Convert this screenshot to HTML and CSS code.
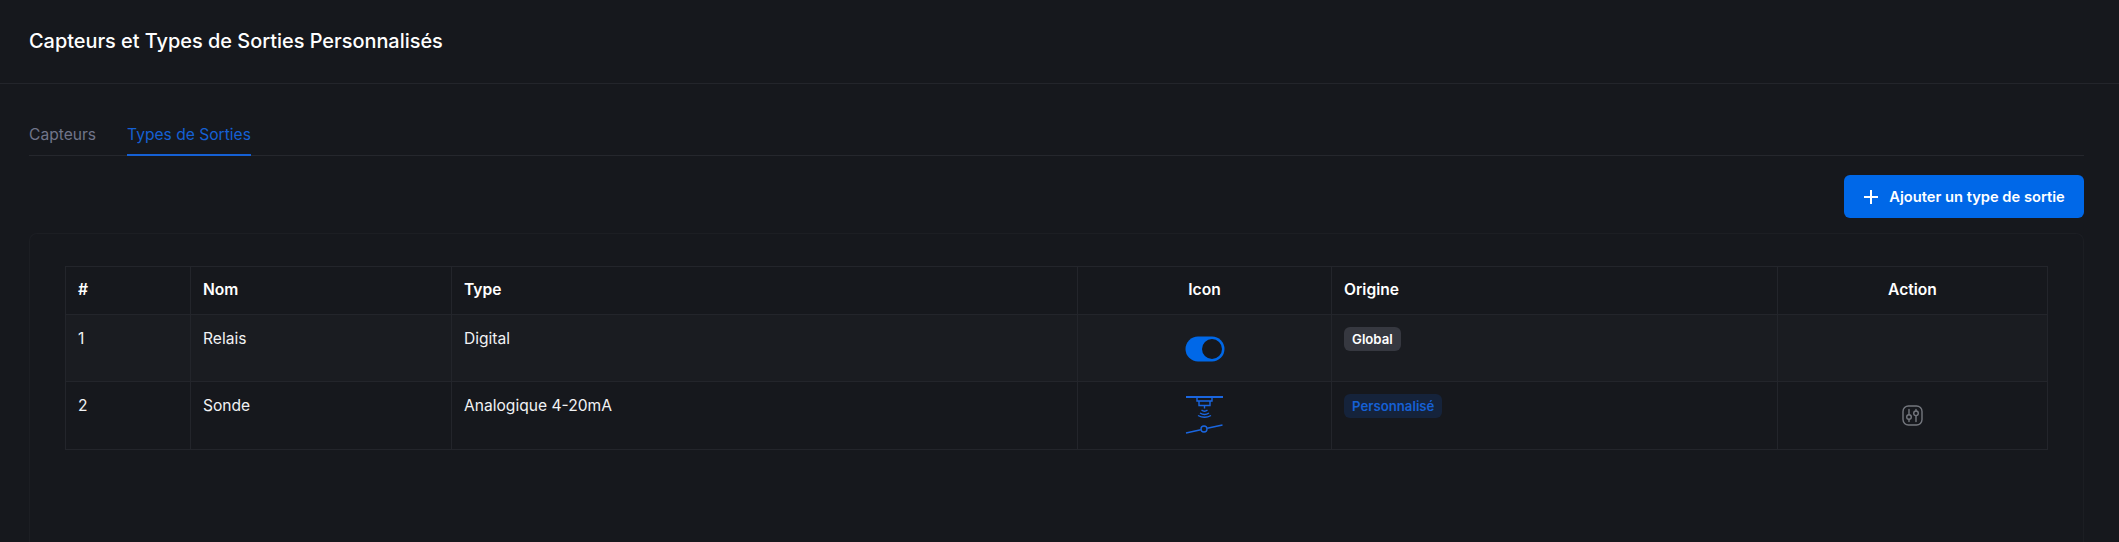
FILE: index.html
```html
<!doctype html>
<html>
<head>
    <meta charset="utf-8">
    <meta name="viewport" content="width=device-width, initial-scale=1.0">
    <title>Capteurs et Types de Sorties</title>
    <link rel="stylesheet" href="styles.css">
</head>
<body>
    <div class="page-header">
        <h1 class="page-title">Capteurs et Types de Sorties Personnalisés</h1>
    </div>
    <div class="page-body">
        <div class="tabs">
            <a class="tab">Capteurs</a>
            <a class="tab active">Types de Sorties</a>
        </div>
        <div class="toolbar">
            <button class="btn-add">
                <svg class="plus" width="16" height="16" viewBox="0 0 16 16"><path d="M8 1v14M1 8h14" stroke="#fff" stroke-width="2" fill="none"/></svg>
                Ajouter un type de sortie
            </button>
        </div>
        <div class="card">
            <table class="grid">
                <colgroup>
                    <col class="c-num"><col class="c-name"><col class="c-type"><col class="c-icon"><col class="c-origin"><col>
                </colgroup>
                <thead>
                    <tr>
                        <th>#</th>
                        <th>Nom</th>
                        <th>Type</th>
                        <th class="center">Icon</th>
                        <th>Origine</th>
                        <th class="center">Action</th>
                    </tr>
                </thead>
                <tbody>
                    <tr class="odd">
                        <td>1</td>
                        <td>Relais</td>
                        <td>Digital</td>
                        <td class="center icon-cell">
                            <svg class="icon toggle" width="40" height="26" viewBox="0 0 40 26"><rect x="0.500" y="0.500" width="39" height="25" rx="12.500" fill="#0068e8"/><circle cx="27" cy="13" r="10" fill="#16181d"/></svg>
                        </td>
                        <td><span class="badge global">Global</span></td>
                        <td></td>
                    </tr>
                    <tr class="even">
                        <td>2</td>
                        <td>Sonde</td>
                        <td>Analogique 4-20mA</td>
                        <td class="center icon-cell">
                            <svg class="icon sensor" width="40" height="42" viewBox="0 0 40 42" fill="none" stroke="#1a66e0" stroke-width="1.400">
                                <path d="M1 2h37" stroke-width="1.800"/>
                                <path d="M12 2v4h15V2"/>
                                <path d="M14 6v4.500h11V6"/>
                                <path d="M19.500 10.500v3"/>
                                <path d="M16.500 15q3 2.500 6 0M15 18q4.500 3 9 0M13 20.500q6.500 3.500 13 0"/>
                                <path d="M1 38l14.800-3.200M22.200 33.300l15.300-3.300"/>
                                <circle cx="19" cy="34" r="3"/>
                            </svg>
                        </td>
                        <td><span class="badge custom">Personnalisé</span></td>
                        <td class="center action-cell">
                            <svg class="icon" width="21" height="21" viewBox="0 0 21 21" fill="none" stroke="#74777e" stroke-width="1.400" stroke-linecap="round">
                                <rect x="1" y="1" width="19" height="19" rx="5.500"/>
                                <path d="M7 4.500v4.500M7 14.500v2M14 4.500v1M14 11v5.500"/>
                                <circle cx="7" cy="12" r="2.300"/>
                                <circle cx="14" cy="8.300" r="2.300"/>
                            </svg>
                        </td>
                    </tr>
                </tbody>
            </table>
        </div>
    </div>
</body>
</html>
```

FILE: styles.css
```css
html, body {
    margin: 0;
    padding: 0;
}
body {
    height: 542px;
    overflow: hidden;
    background-color: #16181d;
    color: #f1f2f4;
    font-family: Inter, "Liberation Sans", sans-serif;
    font-size: 15.6px;
}
.page-header {
    height: 83px;
    padding: 0 29px;
    display: flex;
    align-items: center;
    border-bottom: 1px solid #23252b;
}
.page-title {
    margin: 0 0 1px;
    font-size: 19.9px;
    font-weight: 500;
    color: #ffffff;
}
.page-body {
    padding: 31px 35px 0 29px;
}
.tabs {
    display: flex;
    gap: 31px;
    height: 40px;
    border-bottom: 1px solid #25272d;
}
.tab {
    height: 41px;
    line-height: 39px;
    box-sizing: border-box;
    color: #70758a;
}
.tab.active {
    color: #1560d4;
    border-bottom: 2px solid #1560d4;
}
.toolbar {
    display: flex;
    justify-content: flex-end;
    margin-top: 19px;
}
.btn-add {
    width: 240px;
    height: 43px;
    padding: 0;
    display: flex;
    align-items: center;
    justify-content: center;
    gap: 10px;
    border: 0;
    border-radius: 6px;
    background-color: #0068e8;
    color: #ffffff;
    font-family: inherit;
    font-size: 14.7px;
    font-weight: 600;
}
.card {
    box-sizing: border-box;
    margin-top: 15px;
    height: 309px;
    padding: 32px 35px 0 35px;
    border: 1px solid #1c1e23;
    border-bottom: 0;
    border-radius: 8px 8px 0 0;
}
.grid {
    width: 100%;
    table-layout: fixed;
    border-collapse: collapse;
    border: 1px solid #26282e;
}
.c-num { width: 125px; }
.c-name { width: 261px; }
.c-type { width: 626px; }
.c-icon { width: 254px; }
.c-origin { width: 446px; }
.grid th, .grid td {
    box-sizing: border-box;
    border: 1px solid #23252b;
    padding: 12px;
    text-align: left;
    vertical-align: top;
    line-height: 23px;
}
.grid th {
    height: 48px;
    padding-top: 11px;
    font-weight: 600;
    color: #ffffff;
}
.grid td {
    height: 67px;
}
.grid .even td {
    height: 68px;
}
.grid .center {
    text-align: center;
}
.odd td {
    background-color: #1a1c21;
}
.icon {
    display: block;
    margin: 0 auto;
}
.grid .icon-cell {
    padding: 0;
}
.toggle {
    margin-top: 21px;
}
.sensor {
    margin-top: 13px;
}
.grid .action-cell {
    padding: 0;
    vertical-align: middle;
}
.badge {
    display: inline-block;
    vertical-align: top;
    padding: 0 8px;
    height: 24px;
    line-height: 24px;
    border-radius: 6px;
    font-size: 13.2px;
    font-weight: 600;
}
.badge.global {
    background-color: #363840;
    color: #ffffff;
}
.badge.custom {
    background-color: #15233b;
    color: #1560d4;
}
```
